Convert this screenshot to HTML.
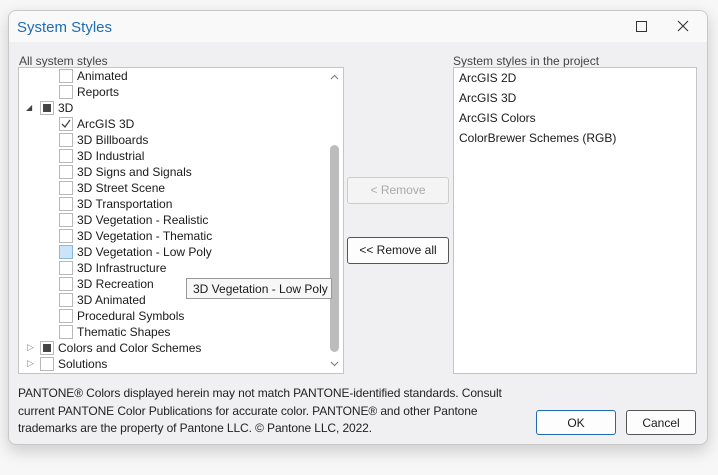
<!DOCTYPE html><html><head><style>
body{margin:0;width:718px;height:475px;background:#f7f7f7;font-family:"Liberation Sans",sans-serif;font-size:12px;color:#1a1a1a;position:relative;overflow:hidden}
.win{position:absolute;left:8px;top:10px;width:698px;height:433px;background:#f0f0f2;border:1px solid #c8c8c8;border-radius:8px;box-shadow:0 6px 16px rgba(0,0,0,.18);overflow:hidden}
.tb{position:absolute;left:0;top:0;right:0;height:31px;background:#f9f9f9}
.abs{position:absolute;white-space:nowrap}
.box{position:absolute;background:#fff;border:1px solid #c4c4c4}
.cb{position:absolute;width:12px;height:12px;border:1px solid #b8b8b8;background:#fff}
.row{position:absolute;height:16px;line-height:16px}
.btn{position:absolute;border:1px solid #555;border-radius:3px;background:#fdfdfd;text-align:center;line-height:24px}
</style></head><body>
<div class="win">
<div class="tb"></div>
<div class="abs" style="left:8px;top:8px;font-size:15px;color:#1e6db3">System Styles</div>
<div class="abs" style="left:627px;top:10px;width:9px;height:9px;border:1px solid #333"></div>
<svg class="abs" style="left:668px;top:9px" width="12" height="12"><path d="M1 1L11 11M11 1L1 11" stroke="#333" stroke-width="1.1"/></svg>
<div class="abs" style="left:10px;top:43px;color:#444">All system styles</div>
<div class="abs" style="left:444px;top:43px;color:#444">System styles in the project</div>
</div>
<div class="box" style="left:18px;top:67px;width:324px;height:305px;overflow:hidden">
<div class="abs" style="left:308px;top:0;width:16px;height:305px;background:#fff"></div>
<div class="abs" style="left:311px;top:77px;width:9px;height:207px;background:#bcbcbc;border-radius:5px"></div>
<svg class="abs" style="left:311px;top:6px" width="9" height="6"><path d="M1 5L4.5 1.5L8 5" stroke="#777" fill="none"/></svg>
<svg class="abs" style="left:311px;top:293px" width="9" height="6"><path d="M1 1L4.5 4.5L8 1" stroke="#777" fill="none"/></svg>
</div>
<div id="rows"></div>
<div class="box" style="left:453px;top:67px;width:242px;height:305px"></div>
<div class="abs" style="left:459px;top:71px">ArcGIS 2D</div>
<div class="abs" style="left:459px;top:91px">ArcGIS 3D</div>
<div class="abs" style="left:459px;top:111px">ArcGIS Colors</div>
<div class="abs" style="left:459px;top:131px">ColorBrewer Schemes (RGB)</div>
<div class="btn" style="left:347px;top:177px;width:100px;height:25px;border-color:#ccc;color:#aaa;background:#f4f4f4">&lt; Remove</div>
<div class="btn" style="left:347px;top:237px;width:100px;height:25px">&lt;&lt; Remove all</div>
<div class="abs" style="left:186px;top:278px;width:146px;height:21px;border:1px solid #999;background:#f7f7f7;line-height:21px;padding-left:6px;box-sizing:border-box">3D Vegetation - Low Poly</div>
<div class="abs" style="left:18px;top:385px;line-height:17.5px;color:#222;letter-spacing:-0.1px">PANTONE® Colors displayed herein may not match PANTONE-identified standards. Consult<br>current PANTONE Color Publications for accurate color. PANTONE® and other Pantone<br>trademarks are the property of Pantone LLC. © Pantone LLC, 2022.</div>
<div class="btn" style="left:536px;top:410px;width:78px;height:23px;border-color:#1e6db3">OK</div>
<div class="btn" style="left:626px;top:410px;width:68px;height:23px">Cancel</div>
<script>
var items=[[2,"Animated"],[2,"Reports"],[1,"3D","o","f"],[2,"ArcGIS 3D",0,"c"],[2,"3D Billboards"],[2,"3D Industrial"],[2,"3D Signs and Signals"],[2,"3D Street Scene"],[2,"3D Transportation"],[2,"3D Vegetation - Realistic"],[2,"3D Vegetation - Thematic"],[2,"3D Vegetation - Low Poly",0,"h"],[2,"3D Infrastructure"],[2,"3D Recreation"],[2,"3D Animated"],[2,"Procedural Symbols"],[2,"Thematic Shapes"],[1,"Colors and Color Schemes","c","f"],[1,"Solutions","c"]];
var h="";items.forEach(function(it,i){var y=68+i*16;var cx=it[0]==1?40:59;
if(it[2]=="o")h+='<div class="abs" style="left:26px;top:'+(y+3)+'px;font-size:8px;color:#444">&#9698;</div>';
if(it[2]=="c")h+='<div class="abs" style="left:27px;top:'+(y+2)+'px;font-size:9px;color:#888">&#9655;</div>';
var bg=it[3]=="h"?"#cce4f7":"#fff";var bc=it[3]=="h"?"#8cb8dc":"#b8b8b8";
h+='<div class="cb" style="left:'+cx+'px;top:'+(y+1)+'px;background:'+bg+';border-color:'+bc+'">';
if(it[3]=="f")h+='<div style="position:absolute;left:2px;top:2px;width:8px;height:8px;background:#444"></div>';
if(it[3]=="c")h+='<svg width="12" height="12" style="position:absolute;left:0;top:0"><path d="M2 6L5 9L10 2" stroke="#444" stroke-width="1.3" fill="none"/></svg>';
h+='</div><div class="row abs" style="left:'+(cx+18)+'px;top:'+y+'px">'+it[1]+'</div>';});
document.getElementById("rows").innerHTML=h;
</script>
</body></html>
